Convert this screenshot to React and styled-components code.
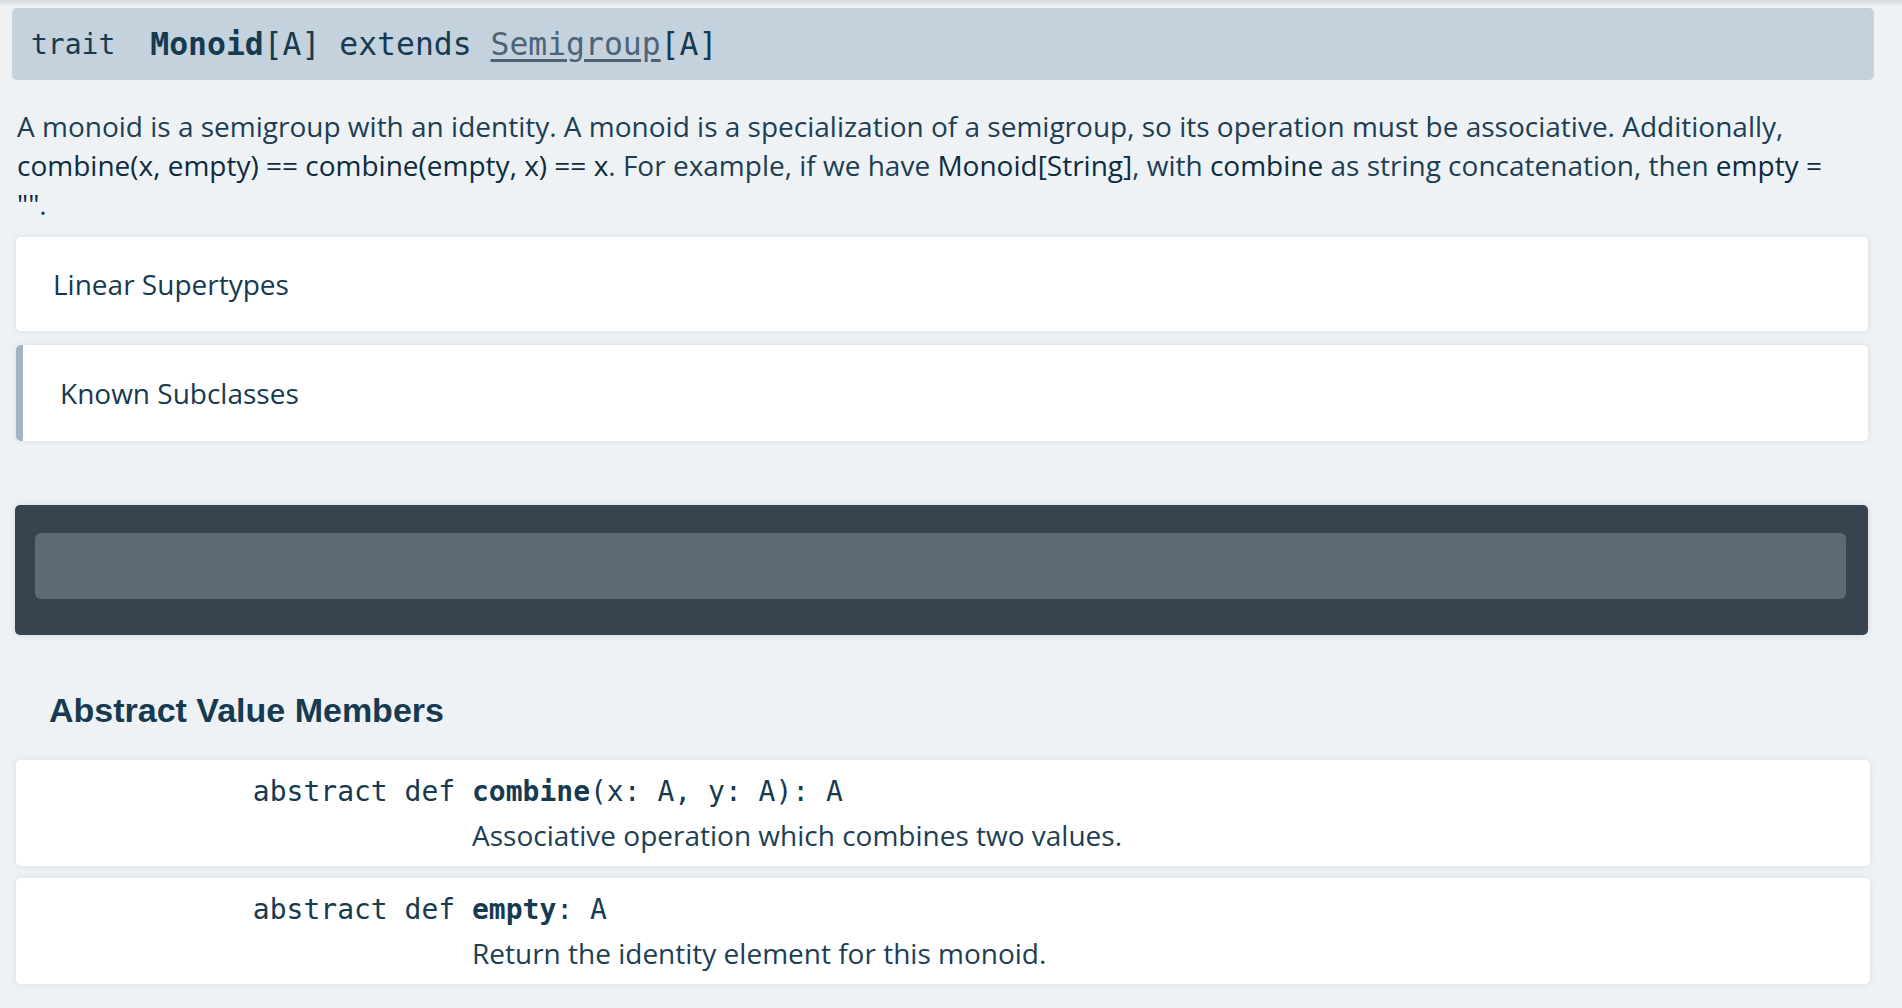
import styled, { createGlobalStyle } from "styled-components";

const GlobalStyle = createGlobalStyle`
  body {
    margin: 0;
    background: #eef2f5;
    color: #163a50;
    font-family: "Open Sans", "Liberation Sans", sans-serif;
  }
`;

const mono = `"DejaVu Sans Mono", "Liberation Mono", monospace`;

const Page = styled.div`
  padding: 8px 28px 24px 12px;
  box-shadow: inset 0 7px 3px -3px rgba(120, 135, 150, 0.18);
  min-height: 1008px;
  box-sizing: border-box;
`;

const Signature = styled.div`
  display: flex;
  align-items: center;
  height: 72px;
  padding-left: 19px;
  background: #c4d2dd;
  border-radius: 5px;
  font-family: ${mono};
  font-size: 31.4px;
  color: #163a50;
  white-space: pre;
`;

const Kind = styled.span`
  font-size: 28px;
  margin-right: 35px;
`;

const Name = styled.span`
  font-weight: bold;
`;

const TypeLink = styled.a`
  color: #4c6476;
  text-decoration: underline;
  text-underline-offset: 4px;
`;

const Comment = styled.p`
  margin: 27px 0 0 5px;
  max-width: 1835px;
  font-size: 28px;
  line-height: 39px;
  color: #1d3e53;
`;

const Code = styled.code`
  font-family: inherit;
  color: #0c2c40;
`;

const Panel = styled.div`
  display: flex;
  align-items: center;
  height: ${(p) => p.$h}px;
  margin: ${(p) => p.$top}px 6px 0 4px;
  padding-left: 37px;
  background: #fff;
  border-radius: 5px;
  border-left: ${(p) => (p.$marked ? "7px solid #a3b3c0" : "none")};
  box-shadow: 0 0 6px rgba(60, 80, 100, 0.12);
  font-size: 28px;
  color: #163a50;
`;

const SearchBox = styled.div`
  margin: 64px 6px 0 3px;
  padding: 28px 22px 36px 20px;
  background: #37444f;
  border-radius: 5px;
  box-shadow: 0 0 6px rgba(60, 80, 100, 0.15);
`;

const SearchField = styled.div`
  height: 66px;
  background: #5e6a73;
  border-radius: 6px;
`;

const SectionTitle = styled.h3`
  margin: 55px 0 0 37px;
  font-family: "Liberation Sans", Arial, sans-serif;
  font-weight: bold;
  font-size: 34px;
  line-height: 40px;
  color: #163a50;
`;

const MemberList = styled.div`
  display: flex;
  flex-direction: column;
  gap: 12px;
  margin: 30px 4px 0 4px;
`;

const Member = styled.div`
  display: grid;
  grid-template-columns: 456px 1fr;
  grid-template-rows: 48px 48px;
  align-items: end;
  height: 106px;
  box-sizing: border-box;
  padding-bottom: 14px;
  background: #fff;
  border-radius: 5px;
  box-shadow: 0 0 6px rgba(60, 80, 100, 0.12);
`;

const Modifiers = styled.span`
  font-family: ${mono};
  font-size: 28px;
  line-height: 32px;
  text-align: right;
  white-space: pre;
  color: #163a50;
`;

const Sig = styled.span`
  font-family: ${mono};
  font-size: 28px;
  line-height: 32px;
  white-space: pre;
  color: #163a50;
`;

const Desc = styled.div`
  grid-column: 2;
  margin-bottom: 4px;
  font-size: 28px;
  line-height: 34px;
  color: #1d3e53;
`;

const members = [
  {
    name: "combine",
    rest: "(x: A, y: A): A",
    desc: "Associative operation which combines two values.",
  },
  {
    name: "empty",
    rest: ": A",
    desc: "Return the identity element for this monoid.",
  },
];

export default function App() {
  return (
    <Page>
      <GlobalStyle />
      <Signature>
        <Kind>trait</Kind>
        <Name>Monoid</Name>[A] extends <TypeLink>Semigroup</TypeLink>[A]
      </Signature>
      <Comment>
        A monoid is a semigroup with an identity. A monoid is a specialization of a
        semigroup, so its operation must be associative. Additionally,{" "}
        <Code>combine(x, empty) == combine(empty, x) == x</Code>. For example, if we
        have <Code>Monoid[String]</Code>, with <Code>combine</Code> as string
        concatenation, then <Code>empty = ""</Code>.
      </Comment>
      <Panel $h={94} $top={13}>Linear Supertypes</Panel>
      <Panel $h={96} $top={14} $marked>Known Subclasses</Panel>
      <SearchBox>
        <SearchField />
      </SearchBox>
      <SectionTitle>Abstract Value Members</SectionTitle>
      <MemberList>
        {members.map((m) => (
          <Member key={m.name}>
            <Modifiers>abstract def </Modifiers>
            <Sig>
              <Name>{m.name}</Name>
              {m.rest}
            </Sig>
            <Desc>{m.desc}</Desc>
          </Member>
        ))}
      </MemberList>
    </Page>
  );
}
